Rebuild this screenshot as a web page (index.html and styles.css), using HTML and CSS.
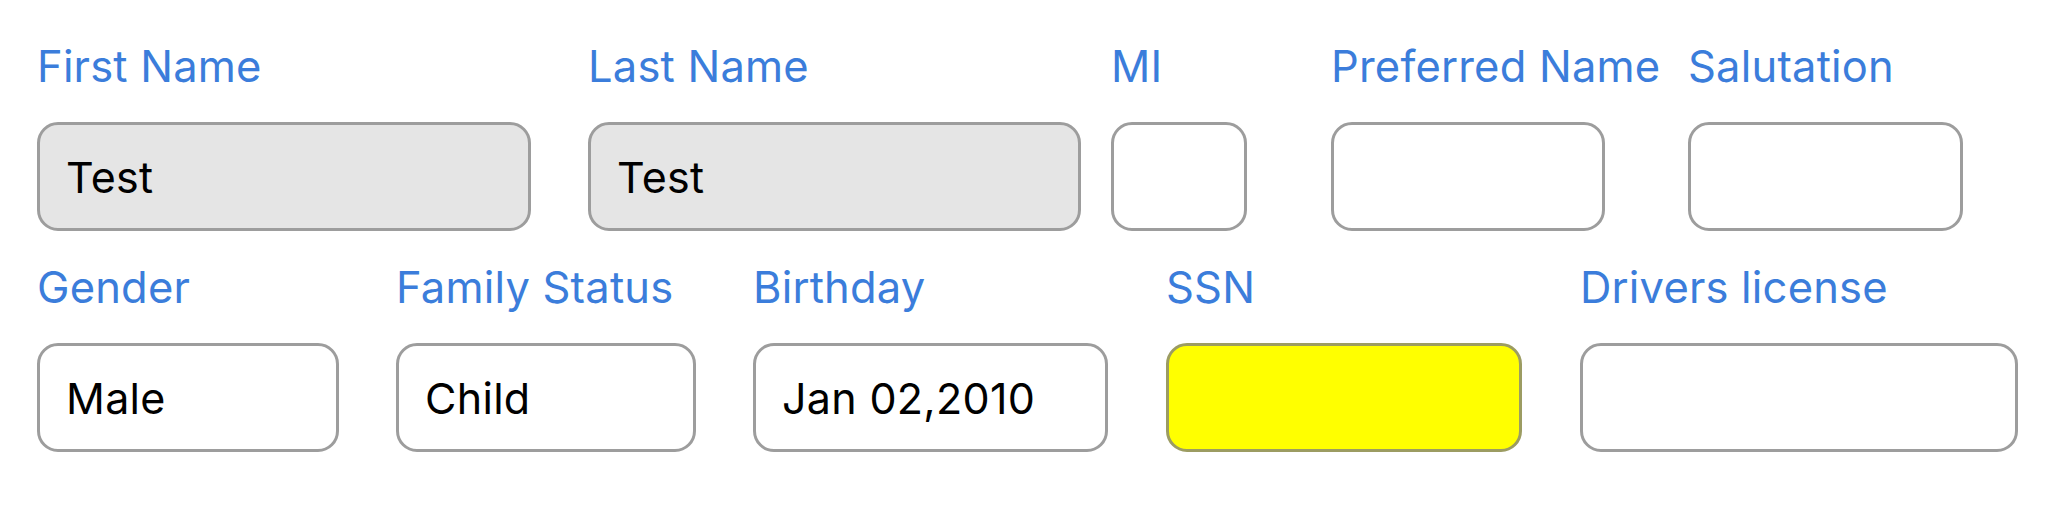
FILE: index.html
```html
<!DOCTYPE html>
<html lang="en">
<head>
<meta charset="utf-8">
<title>Person form</title>
<link rel="stylesheet" href="styles.css">
</head>
<body>
<div class="form">
  <div class="row row-1">
    <div class="field">
      <div class="label">First Name</div>
      <div class="box filled w-first">Test</div>
    </div>
    <div class="field">
      <div class="label">Last Name</div>
      <div class="box filled w-last">Test</div>
    </div>
    <div class="field">
      <div class="label">MI</div>
      <div class="box w-mi"></div>
    </div>
    <div class="field">
      <div class="label">Preferred Name</div>
      <div class="box w-pref"></div>
    </div>
    <div class="field">
      <div class="label">Salutation</div>
      <div class="box w-sal"></div>
    </div>
  </div>
  <div class="row row-2">
    <div class="field">
      <div class="label">Gender</div>
      <div class="box w-gender">Male</div>
    </div>
    <div class="field">
      <div class="label">Family Status</div>
      <div class="box w-family">Child</div>
    </div>
    <div class="field">
      <div class="label">Birthday</div>
      <div class="box w-birthday">Jan 02,2010</div>
    </div>
    <div class="field">
      <div class="label">SSN</div>
      <div class="box required w-ssn"></div>
    </div>
    <div class="field">
      <div class="label">Drivers license</div>
      <div class="box w-license"></div>
    </div>
  </div>
</div>
</body>
</html>
```

FILE: styles.css
```css
html, body {
  margin: 0;
  padding: 0;
  background: #ffffff;
}

.form {
  padding: 41px 0 0 37px;
  font-family: Inter, "Liberation Sans", sans-serif;
}

.row {
  display: grid;
}

.row-1 {
  grid-template-columns: 551px 523px 220px 357px auto;
  margin-bottom: 31px;
}

.row-2 {
  grid-template-columns: 359px 357px 413px 414px auto;
}

.field {
  display: flex;
  flex-direction: column;
  align-items: flex-start;
}

.label {
  font-size: 43.5px;
  line-height: 50px;
  height: 50px;
  color: #3b7ddb;
  white-space: nowrap;
  margin-bottom: 31px;
  padding-left: 0;
  letter-spacing: 0.2px;
}

.box {
  box-sizing: border-box;
  height: 109px;
  border: 3px solid #9d9d9d;
  border-radius: 21px;
  background: #ffffff;
  display: flex;
  align-items: center;
  padding-left: 26px;
  font-size: 43px;
  color: #000000;
  white-space: nowrap;
  letter-spacing: 0.3px;
}

.box.filled {
  background: #e5e5e5;
}

.box.required {
  background: #ffff00;
  border-color: #9c9c62;
}

.w-first { width: 494px; }
.w-last { width: 493px; }
.w-mi { width: 136px; }
.w-pref { width: 274px; }
.w-sal { width: 275px; }

.w-gender { width: 302px; }
.w-family { width: 300px; }
.w-birthday { width: 355px; }
.w-ssn { width: 356px; }
.w-license { width: 438px; }
```
